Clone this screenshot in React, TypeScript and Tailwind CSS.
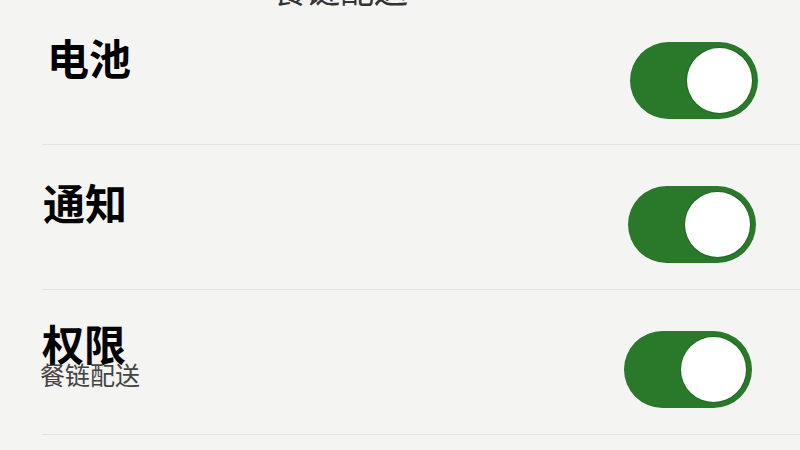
import React from 'react';

const rows = [
  { id: 1, label: '电池', textPad: 'pt-[36px] pl-[5px]', togglePad: 'pt-[42px] pr-[42px]', sub: '' },
  { id: 2, label: '通知', textPad: 'pt-[36px] pl-[1px]', togglePad: 'pt-[41px] pr-[44px]', sub: '' },
  { id: 3, label: '权限', textPad: 'pt-[32px] pl-0', togglePad: 'pt-[41px] pr-[48px]', sub: '餐链配送' },
];

function Toggle() {
  return (
    <div className="flex h-[77px] w-[128px] items-center justify-end rounded-full bg-[#2a782a] pr-[6px]">
      <div className="h-[65px] w-[65px] rounded-full bg-white shadow-[0_0_0_1px_#1f6a22]" />
    </div>
  );
}

export default function App() {
  return (
    <div
      className="h-[450px] w-[800px] overflow-hidden bg-[#f4f4f3]"
      style={{ fontFamily: '"Noto Sans CJK SC", "Noto Sans", sans-serif' }}
    >
      {/* cut-off caption from the section above */}
      <div className="h-0 pl-[272px]">
        <p className="-translate-y-[28px] text-[34px] leading-none text-[#333]">餐链配送</p>
      </div>

      <div className="pl-[42px]">
        {rows.map((row) => (
          <div
            key={row.id}
            className="flex h-[145px] items-start justify-between border-b border-[#e3e3e1]"
          >
            <div className={row.textPad}>
              <div className="text-[42px] font-bold leading-none text-black">{row.label}</div>
              {row.sub && (
                <div className="-mt-[2px] -ml-[2px] text-[25px] leading-none text-[#444]">{row.sub}</div>
              )}
            </div>
            <div className={row.togglePad}>
              <Toggle />
            </div>
          </div>
        ))}
      </div>
    </div>
  );
}
